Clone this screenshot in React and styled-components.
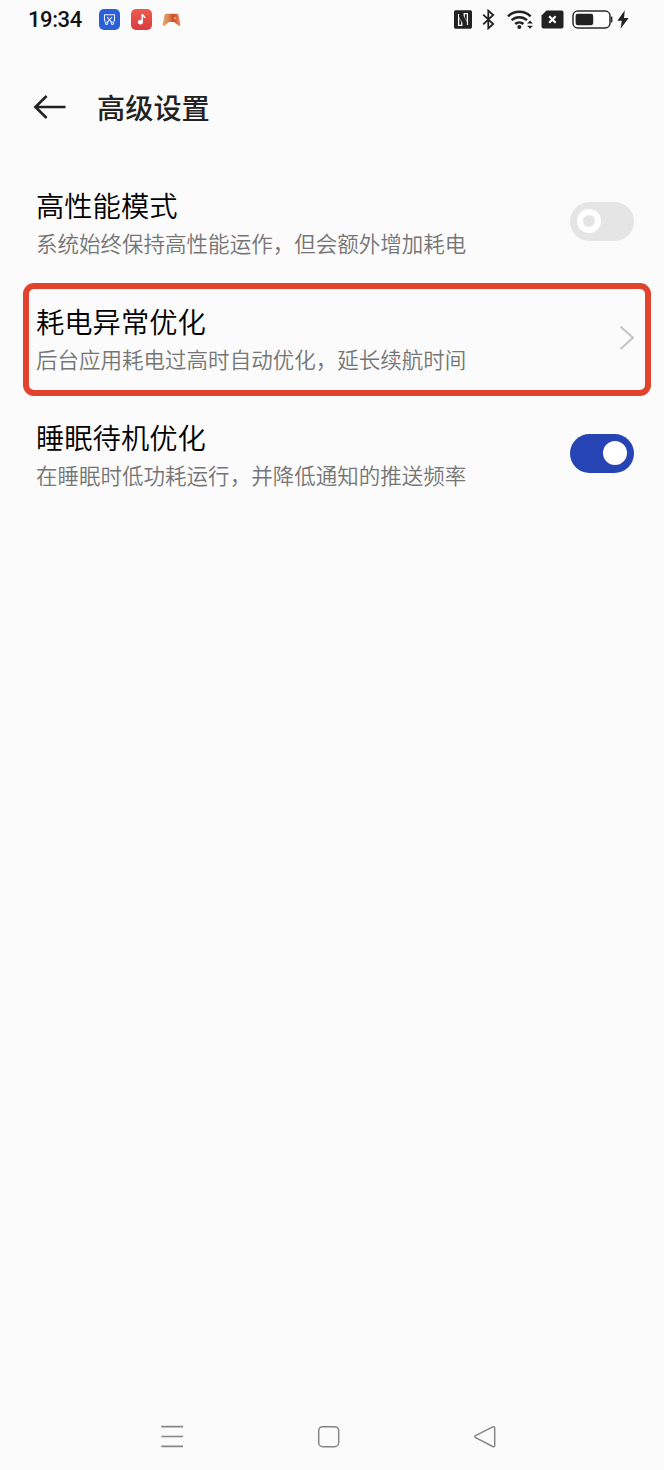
import React, { useState } from 'react'
import styled, { createGlobalStyle } from 'styled-components';

const initialSettings = [
    {
        id: 'performance',
        title: '高性能模式',
        text: '系统始终保持高性能运作，但会额外增加耗电',
        type: 'switch',
    },
    {
        id: 'abnormal',
        title: '耗电异常优化',
        text: '后台应用耗电过高时自动优化，延长续航时间',
        type: 'link',
        marked: true,
    },
    {
        id: 'sleep',
        title: '睡眠待机优化',
        text: '在睡眠时低功耗运行，并降低通知的推送频率',
        type: 'switch',
    },
]

const StatusIcons = () => (
    <StatusRight>
        {/* nfc */}
        <svg width="18" height="19" viewBox="0 0 18 19">
            <rect x="0" y="0.3" width="18" height="18.4" rx="1.6" fill="#222" />
            <path d="M4.600 4v11.300h3.200v-4L4.600 6.500M13.400 15V3.700h-3.200v4l3.200 4.800" fill="none" stroke="#fbfbfb" strokeWidth="1.300" />
            <path d="M5.300 3.800 8 3.800 12.700 11v4.200h-2.600L5.300 8z" fill="#222" />
        </svg>
        {/* bluetooth */}
        <svg width="13" height="21" viewBox="0 0 13 21">
            <path d="M1.2 5.6 11.2 15 6.3 19.4V1.6L11.2 6 1.2 15.4" fill="none" stroke="#222" strokeWidth="1.8" />
        </svg>
        {/* wifi */}
        <svg width="27" height="21" viewBox="0 0 27 21">
            <g fill="none" stroke="#222" strokeWidth="2.5">
                <path d="M1 7.3a16.6 16.6 0 0 1 22.6 0" />
                <path d="M4.6 11.2a11.3 11.3 0 0 1 15.4 0" />
                <path d="M8.2 15a6 6 0 0 1 8.2 0" />
            </g>
            <circle cx="12.3" cy="18" r="2" fill="#222" />
            <path d="M20.1 14.5 23 11.4l2.9 3.1zM20.1 16.7h5.8L23 19.8z" fill="#222" />
        </svg>
        {/* sim */}
        <svg width="23" height="19" viewBox="0 0 23 19">
            <path d="M5.5.5H20.5a2 2 0 0 1 2 2v14a2 2 0 0 1-2 2H2.5a2 2 0 0 1-2-2V5.5z" fill="#222" />
            <path d="M8.2 6.3l6.4 6.4M14.6 6.3l-6.4 6.4" stroke="#fff" strokeWidth="2.2" />
        </svg>
        {/* battery */}
        <svg width="41" height="19" viewBox="0 0 41 19">
            <rect x="1" y="1" width="37" height="17" rx="4.8" fill="#fff" stroke="#2a2a2a" strokeWidth="1.5" />
            <rect x="3.6" y="3.7" width="17.6" height="11.6" rx="2.2" fill="#222" />
            <path d="M39.6 6.6v5.8" stroke="#2a2a2a" strokeWidth="1.6" />
        </svg>
        {/* charging */}
        <svg width="12" height="19" viewBox="0 0 12 19">
            <path d="M7.8.3.4 10.8h4.4L3.6 18.7 11.6 7.9H7z" fill="#222" />
        </svg>
    </StatusRight>
)

const AppIcons = () => (
    <>
        <AppBadge $color="#2b5fd6">
            <svg width="21" height="21" viewBox="0 0 21 21" fill="none" stroke="#e8f0ff" strokeWidth="1.1">
                <path d="M6.400 12H5.500V5.700h10V12h-.900" />
                <path d="M8 8l4.500 5.200M13 8l-4.500 5.200" />
                <circle cx="7.6" cy="14.2" r="1.200" />
                <circle cx="13.4" cy="14.2" r="1.200" />
            </svg>
        </AppBadge>
        <AppBadge $color="linear-gradient(#ee5a50, #d93c3c)">
            <svg width="21" height="21" viewBox="0 0 21 21">
                <ellipse cx="9.4" cy="13.2" rx="2.5" ry="2.4" fill="#fff" />
                <path d="M11.200 13.300V5c.3 1.800 2.400 1.600 2.500 4" fill="none" stroke="#fff" strokeWidth="1.500" />
            </svg>
        </AppBadge>
        <svg width="19" height="14" viewBox="0 0 19 14">
            <defs>
                <linearGradient id="pad" x1="0" x2="1">
                    <stop offset="0" stopColor="#e8a878" />
                    <stop offset="0.35" stopColor="#d98350" />
                    <stop offset="0.6" stopColor="#cf4a2a" />
                    <stop offset="1" stopColor="#ea905c" />
                </linearGradient>
            </defs>
            <path d="M4.200.8h10.600c1 0 1.500.6 1.800 1.600l1.700 9c.3 1.800-.8 2.100-1.900 1.200L12 9H7l-4.400 3.600C1.500 13.500.4 13.200.7 11.400l1.700-9C2.700 1.400 3.200.8 4.200.8z" fill="url(#pad)" />
            <circle cx="12.800" cy="5.200" r="1" fill="#f5b87c" />
        </svg>
    </>
)

const App = () => {
    const [enabled, setEnabled] = useState({ performance: false, sleep: true });

    const toggle = (id) => {
        setEnabled({ ...enabled, [id]: !enabled[id] });
    }

    return (
        <Screen>
            <GlobalStyle />
            <StatusBar>
                <Time>19:34</Time>
                <AppIcons />
                <StatusIcons />
            </StatusBar>
            <Header>
                <BackButton aria-label="返回">
                    <svg width="34" height="26" viewBox="0 0 34 26" fill="none" stroke="#222" strokeWidth="2.600">
                        <path d="M13.600 2 2.400 13l11.200 11M2.400 13H32.500" />
                    </svg>
                </BackButton>
                <h1>高级设置</h1>
            </Header>
            <List>
                {initialSettings.map((item) => (
                    <Row key={item.id} $marked={item.marked}>
                        <RowText>
                            <h2>{item.title}</h2>
                            <p>{item.text}</p>
                        </RowText>
                        {item.type === 'switch' ? (
                            <Switch
                                role="switch"
                                aria-checked={enabled[item.id]}
                                $on={enabled[item.id]}
                                onClick={() => toggle(item.id)}
                            >
                                <Knob $on={enabled[item.id]} />
                            </Switch>
                        ) : (
                            <svg width="16" height="26" viewBox="0 0 16 26" fill="none" stroke="#c4c4c4" strokeWidth="2">
                                <path d="M2.500 2.500 15 13.700 2.500 24.900" />
                            </svg>
                        )}
                    </Row>
                ))}
            </List>
            <NavBar>
                <svg width="24" height="24" viewBox="0 0 24 24" stroke="#858585" strokeWidth="1.700">
                    <path d="M1.300 1.700h21.700M1.300 11.500h21.700M1.300 21.400h21.700" />
                </svg>
                <svg width="24" height="24" viewBox="0 0 24 24" fill="none" stroke="#858585" strokeWidth="1.500">
                    <rect x="1.700" y="1.700" width="20" height="20" rx="4" />
                </svg>
                <svg width="24" height="24" viewBox="0 0 24 24" fill="none" stroke="#858585" strokeWidth="1.500" strokeLinejoin="round">
                    <path d="M2.600 10.700 19.700 1.900c1.100-.500 2 0 2 1.100v17.400c0 1.100-.900 1.600-2 1.100L2.600 12.700c-1-.500-1-1.500 0-2z" />
                </svg>
            </NavBar>
        </Screen>
    )
}

export default App;

const GlobalStyle = createGlobalStyle`
    *{
        box-sizing:border-box;
    }
    body{
        margin:0;
        background:#fbfbfb;
        font-family:"Noto Sans CJK SC", sans-serif;
    }
    svg{
        display:block;
        flex-shrink:0;
    }
    h1, h2, p{
        margin:0;
    }
    button{
        padding:0;
        border:none;
        background:none;
        cursor:pointer;
    }
`
const Screen = styled.div`
    display:flex;
    flex-direction:column;
    width:664px;
    height:1470px;
    background:#fbfbfb;
`
const StatusBar = styled.div`
    display:flex;
    align-items:center;
    height:39px;
    padding:0 35px 0 28px;
`
const Time = styled.span`
    width:71px;
    font-family:Roboto, sans-serif;
    font-size:22px;
    font-weight:500;
    letter-spacing:-0.4px;
    line-height:39px;
    color:#111;
`
const AppBadge = styled.div`
    width:21px;
    height:21px;
    margin-right:10.5px;
    border-radius:5px;
    background:${props => props.$color};
`
const StatusRight = styled.div`
    display:flex;
    align-items:center;
    margin-left:auto;
    svg:nth-child(1){ margin-right:10px; }
    svg:nth-child(2){ margin-right:12px; }
    svg:nth-child(3){ margin-right:7px; }
    svg:nth-child(4){ margin-right:8px; }
    svg:nth-child(5){ margin-right:4px; }
`
const Header = styled.header`
    display:flex;
    align-items:center;
    height:124px;
    padding:12px 33px 0;
    h1{
        margin-left:30px;
        font-size:28.200px;
        font-weight:500;
        line-height:40px;
        color:#222;
    }
`
const BackButton = styled.button`
    width:34px;
    height:26px;
`
const List = styled.main`
    flex:1;
`
const Row = styled.section`
    position:relative;
    display:flex;
    align-items:center;
    justify-content:space-between;
    height:116px;
    padding:0 30px 0 36px;

    ${props => props.$marked && `
        &::after{
            content:"";
            position:absolute;
            top:4px;
            left:23px;
            right:13px;
            bottom:-1px;
            border:6px solid #e2432e;
            border-radius:11px;
            pointer-events:none;
        }
    `}
`
const RowText = styled.div`
    padding-top:6px;
    h2{
        font-size:28.300px;
        font-weight:350;
        line-height:38px;
        color:#000;
    }
    p{
        font-size:21.520px;
        font-weight:350;
        line-height:38px;
        color:#757575;
    }
`
const Switch = styled.button`
    display:flex;
    align-items:center;
    justify-content:${props => props.$on ? "flex-end" : "flex-start"};
    width:64px;
    height:39px;
    && {
        padding:0 7px;
        background:${props => props.$on ? "#2744b5" : "#e5e5e5"};
    }
    border-radius:20px;
`
const Knob = styled.span`
    width:24px;
    height:24px;
    border:${props => props.$on ? "12px" : "6px"} solid #fff;
    border-radius:50%;
`
const NavBar = styled.nav`
    display:flex;
    justify-content:space-between;
    padding:0 167px 21px 160px;
`
